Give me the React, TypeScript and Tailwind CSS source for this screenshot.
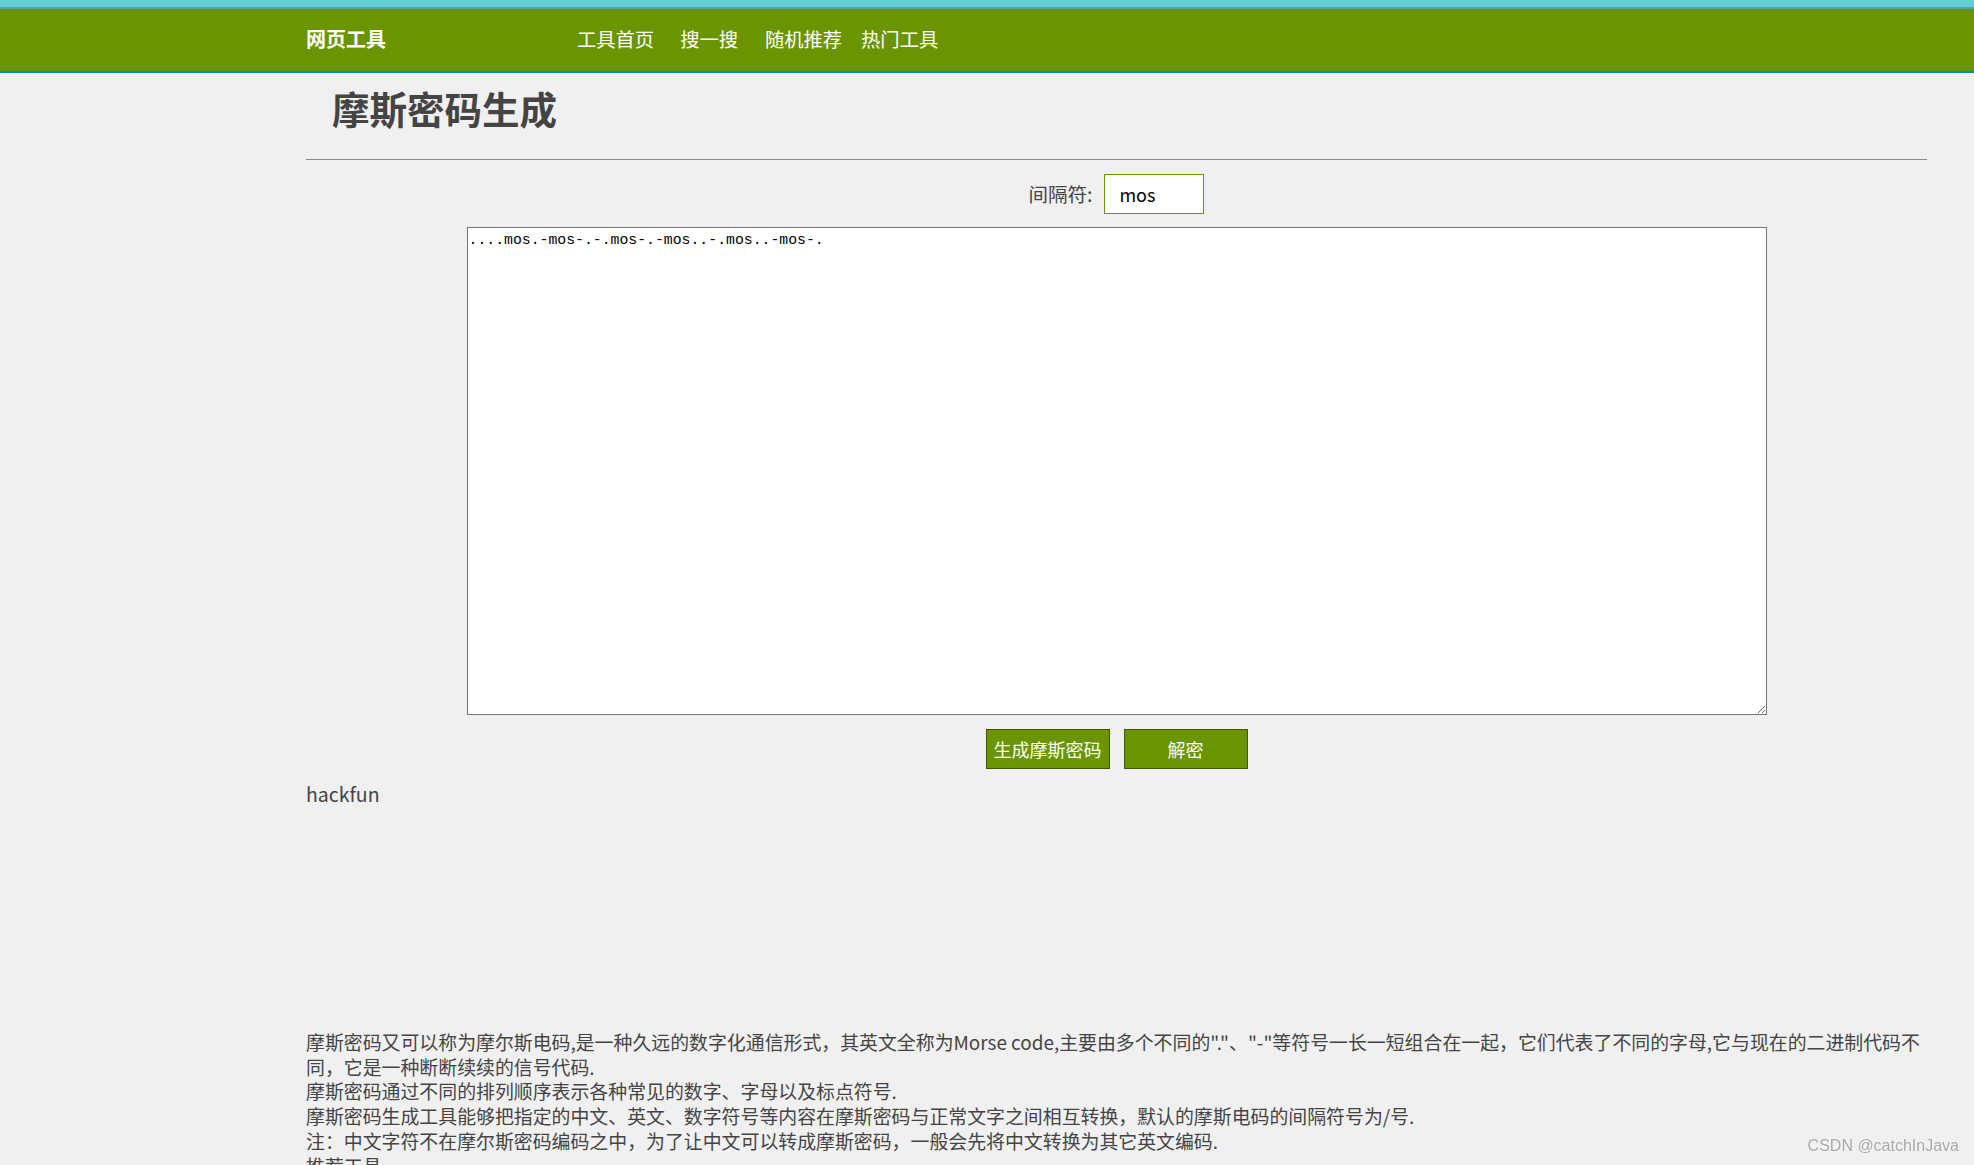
import { useState } from 'react';

const navItems = [
  { label: '工具首页', cls: 'ml-0' },
  { label: '搜一搜', cls: 'ml-[26px]' },
  { label: '随机推荐', cls: 'ml-[27px]' },
  { label: '热门工具', cls: 'ml-[19px]' },
];

export default function App() {
  const [sep, setSep] = useState('mos');
  const [text, setText] = useState('....mos.-mos-.-.mos-.-mos..-.mos..-mos-.');

  return (
    <div className="relative min-h-screen bg-[#f0f0f0] font-['Noto_Sans_CJK_SC','Noto_Sans',sans-serif] text-[#444]">
      {/* top bar */}
      <div className="h-[7px] bg-[#62d0d4]" />
      <div className="h-[2px] bg-[#4aa7ab]" />
      <nav className="flex h-[62px] items-center bg-[#6a9500] pb-[2px] pl-[306px] text-white">
        <span className="w-[271px] text-[20px] font-bold">网页工具</span>
        {navItems.map((item) => (
          <a key={item.label} href="#" className={`text-[19.3px] ${item.cls}`}>
            {item.label}
          </a>
        ))}
      </nav>
      <div className="h-[2px] bg-[#0a84d6]" />

      <div className="pl-[306px] pr-[47px]">
        <div className="flex h-[86px] items-center pb-[16px] pl-[26px]">
          <h1 className="text-[37.5px] font-bold leading-none text-[#444]">摩斯密码生成</h1>
        </div>
        <hr className="border-t border-[#8a8a8a]" />

        {/* separator */}
        <div className="mt-[14px] flex items-center justify-center">
          <label className="mr-[12px] text-[19.5px]">间隔符:</label>
          <input
            value={sep}
            onChange={(e) => setSep(e.target.value)}
            className="h-[40px] w-[100px] border border-[#6a9500] bg-white px-[14px] text-[18px] text-black outline-none"
          />
        </div>

        <textarea
          value={text}
          onChange={(e) => setText(e.target.value)}
          className="mx-auto mt-[13px] block h-[488px] w-[1300px] border border-[#767676] bg-white px-[1px] pt-[4px] font-['Liberation_Mono',monospace] text-[14.8px] leading-[17px] text-black outline-none"
        />

        <div className="mt-[14px] flex justify-center gap-[14px]">
          <button className="h-[40px] w-[124px] border border-[#3d5a00] bg-[#6a9500] text-[18px] text-white">
            生成摩斯密码
          </button>
          <button className="h-[40px] w-[124px] border border-[#3d5a00] bg-[#6a9500] text-[18px] text-white">
            解密
          </button>
        </div>

        <p className="mt-[13px] text-[19.5px] leading-[24.8px]">hackfun</p>

        {/* ad slot */}
        <div className="h-[223px]" />

        <div className="text-[18.9px] leading-[24.8px]">
          <p>
            摩斯密码又可以称为摩尔斯电码,是一种久远的数字化通信形式，其英文全称为Morse code,主要由多个不同的"."、"-"等符号一长一短组合在一起，它们代表了不同的字母,它与现在的二进制代码不同，它是一种断断续续的信号代码.
          </p>
          <p>摩斯密码通过不同的排列顺序表示各种常见的数字、字母以及标点符号.</p>
          <p>
            摩斯密码生成工具能够把指定的中文、英文、数字符号等内容在摩斯密码与正常文字之间相互转换，默认的摩斯电码的间隔符号为/号.
          </p>
          <p>注：中文字符不在摩尔斯密码编码之中，为了让中文可以转成摩斯密码，一般会先将中文转换为其它英文编码.</p>
          <p>推荐工具</p>
          <div className="h-[200px]" />
        </div>
      </div>

      {/* watermark */}
      <div className="fixed bottom-[7px] right-[15px] font-['Liberation_Sans_Narrow','Liberation_Sans',sans-serif] text-[16px] text-[#a8a8a8] [text-shadow:0_0_2px_#fff]">
        CSDN @catchInJava
      </div>
    </div>
  );
}
